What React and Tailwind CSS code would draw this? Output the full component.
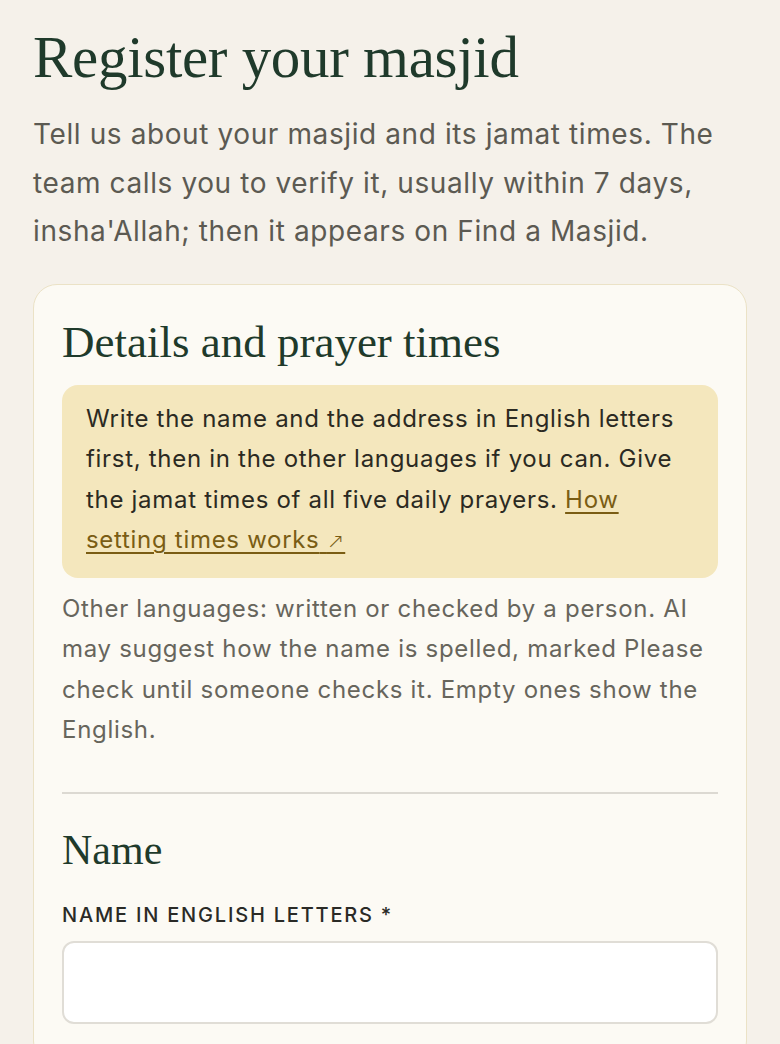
import React, { useState } from "react";

const serif = "font-['Liberation_Serif',serif]";

const App = () => {
  const [name, setName] = useState("");

  return (
    <div className="min-h-screen bg-[#f5f1ea] px-[33px] pt-[23px] pb-10 font-['Inter',sans-serif]">
      <h1 className={`${serif} text-[59px] leading-[69px] text-[#1f3a2b] tracking-[-0.3px]`}>
        Register your masjid
      </h1>
      <p className="mt-[18px] text-[28px] leading-[48.5px] tracking-[0.6px] text-[#5c5a52]">
        Tell us about your masjid and its jamat times. The team calls you to verify it, usually
        within 7 days, insha'Allah; then it appears on Find a Masjid.
      </p>

      <div className="mt-[28px] rounded-[24px] border-[1.5px] border-[#ebe2c6] bg-[#fcfaf4] px-[28px] pt-[30px] pb-10">
        <h2 className={`${serif} text-[45px] leading-[54px] text-[#1f3a2b]`}>
          Details and prayer times
        </h2>

        <div className="mt-[16px] rounded-[16px] bg-[#f4e7bd] px-[24px] pt-[14px] pb-[16px] text-[24px] leading-[40.5px] tracking-[0.7px] text-[#2b2a22]">
          Write the name and the address in English letters first, then in the other languages if
          you can. Give the jamat times of all five daily prayers.{" "}
          <a href="#" className="text-[#7a5d14] underline underline-offset-[4px] decoration-[1.5px]">
            How setting times works{" "}
            <span className="font-['DejaVu_Sans',sans-serif] text-[21px] font-light">↗</span>
          </a>
        </div>

        <p className="mt-[11px] text-[24px] leading-[40.5px] tracking-[0.7px] text-[#67655c]">
          Other languages: written or checked by a person. AI may suggest how the name is spelled,
          marked Please check until someone checks it. Empty ones show the English.
        </p>

        <div className="mt-[41px] h-[2px] bg-[#dcd9d2]" />

        <h3 className={`${serif} mt-[31px] text-[42px] leading-[50px] text-[#1f3a2b]`}>Name</h3>

        <label className="mt-[28px] block text-[20px] leading-[24px] font-medium uppercase tracking-[1.8px] text-[#2a2a26]">
          Name in English letters *
        </label>
        <input
          value={name}
          onChange={(e) => setName(e.target.value)}
          className="mt-[14px] block h-[83px] w-full rounded-[12px] border-2 border-[#e0ddd6] bg-white px-4 text-[22px] outline-none"
        />
      </div>
    </div>
  );
};

export default App;
